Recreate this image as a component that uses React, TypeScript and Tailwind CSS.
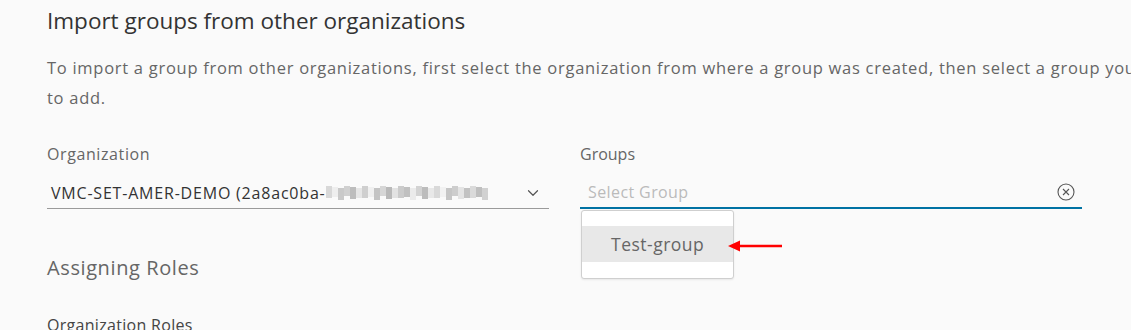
import { ChevronDown } from "lucide-react";

const mosaic = [
  "#d8d8d8", "#eeeeee", "#c9c9c9", "#d0d0d0", "#bdbdbd", "#e6e6e6", "#cfcfcf", "#f0f0f0",
  "#c4c4c4", "#d6d6d6", "#b9b9b9", "#e2e2e2", "#cbcbcb", "#c0c0c0", "#ebebeb", "#d3d3d3",
  "#bcbcbc", "#e8e8e8", "#d9d9d9", "#f2f2f2", "#c6c6c6", "#cdcdcd", "#e4e4e4", "#c2c2c2",
  "#dadada", "#bfbfbf", "#d1d1d1",
];

function BlurredId() {
  return (
    <svg width="164" height="14" viewBox="0 0 164 14" className="shrink-0">
      {mosaic.map((c, i) => (
        <rect key={i} x={i * 6} y={(i % 3) * 1} width="6" height={12 - (i % 2) * 2} fill={c} />
      ))}
    </svg>
  );
}

function ClearIcon() {
  return (
    <svg width="18" height="18" viewBox="0 0 18 18" fill="none" stroke="#555" strokeWidth="1.1">
      <circle cx="9" cy="9" r="8" />
      <path d="M6 6l6 6M12 6l-6 6" />
    </svg>
  );
}

function RedArrow() {
  return (
    <svg width="56" height="14" viewBox="0 0 56 14" className="shrink-0">
      <path d="M10 7H55" stroke="#ff0000" strokeWidth="2.5" />
      <path d="M1 7L13 1.5V12.5Z" fill="#ff0000" />
    </svg>
  );
}

export default function App() {
  return (
    <div
      className="h-[330px] w-[1131px] overflow-hidden bg-[#fafafa] pl-[47px] text-[#666]"
      style={{ fontFamily: "'Open Sans', 'Noto Sans', sans-serif" }}
    >
      <h1 className="pt-[6px] text-[22.5px] leading-[30px] text-[#333]">
        Import groups from other organizations
      </h1>
      <p className="mt-[17px] w-[1140px] text-[16.5px] leading-[30px] tracking-[0.72px] text-[#666]">
        To import a group from other organizations, first select the organization from where a group was created, then select a group you want to add.
      </p>

      <div className="mt-[31px] flex gap-[31px]">
        {/* Organization */}
        <div className="w-[502px]">
          <div className="text-[16px] leading-[20px] tracking-[0.6px]">Organization</div>
          <div className="mt-[13px] flex h-[32px] items-center border-b border-[#9a9a9a] text-[16px] tracking-[0.8px] text-[#333]">
            <span className="pl-[4px]">VMC-SET-AMER-DEMO (2a8ac0ba-</span>
            <BlurredId />
            <span className="flex-1" />
            <ChevronDown size={18} strokeWidth={1.6} className="mr-[7px] text-[#555]" />
          </div>
        </div>

        {/* Groups */}
        <div className="relative w-[502px]">
          <div className="text-[16px] leading-[20px]">Groups</div>
          <div className="mt-[13px] flex h-[32px] items-center border-b-2 border-[#0072a3] text-[16px] tracking-[0.4px]">
            <span className="flex-1 pl-[8px] text-[#bbb]">Select Group</span>
            <span className="mr-[7px] flex">
              <ClearIcon />
            </span>
          </div>
          <div className="absolute left-[1px] top-[66px] flex items-center">
            <div className="w-[153px] rounded-[3px] border border-[#cfcfcf] bg-white pb-[16px] pt-[15px] shadow-[0_1px_2px_rgba(0,0,0,0.08)]">
              <div className="flex h-[36px] items-center bg-[#e8e8e8] pl-[29px] text-[17.5px] tracking-[0.5px] text-[#666]">
                Test-group
              </div>
            </div>
            <span className="ml-[-7px] mt-[2px]">
              <RedArrow />
            </span>
          </div>
        </div>
      </div>

      <h2 className="mt-[45px] text-[20px] leading-[28px] tracking-[0.6px] text-[#666]">Assigning Roles</h2>
      <div className="mt-[33px] text-[16px] leading-[20px] tracking-[0.3px] text-[#444]">Organization Roles</div>
    </div>
  );
}
